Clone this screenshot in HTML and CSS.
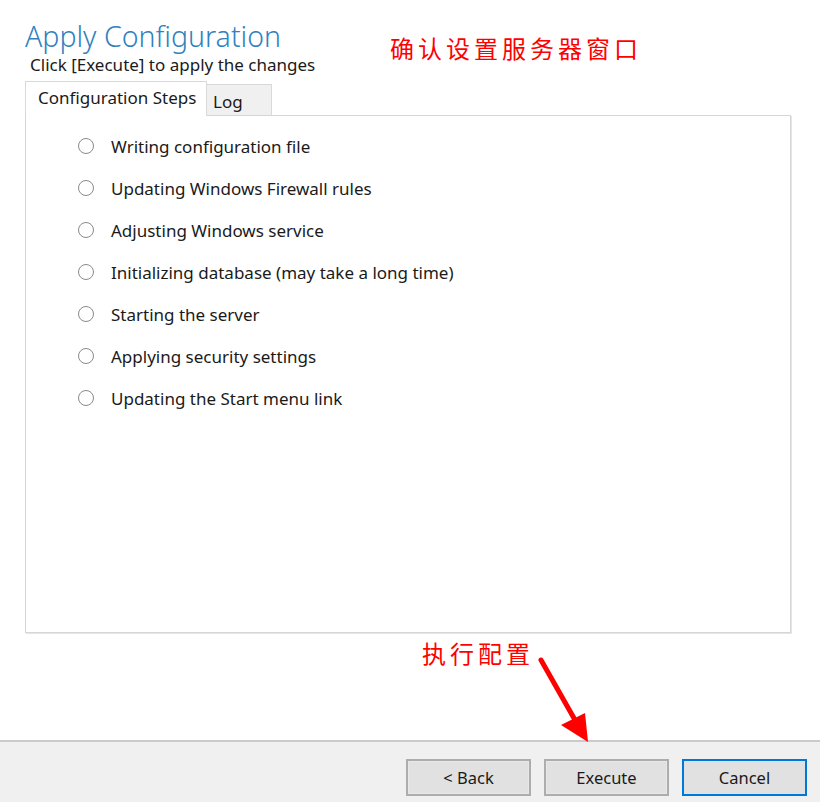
FILE: index.html
```html
<!DOCTYPE html>
<html lang="en">
  <head>
    <meta charset="UTF-8" />
    <title>Apply Configuration</title>
    <link rel="stylesheet" href="styles.css">
  </head>
  <body>
    <div class="wizard">
      <div class="wizard-body">
        <h1 class="title">Apply Configuration</h1>
        <p class="subtitle">Click [Execute] to apply the changes</p>

        <div class="tabs">
          <div class="tab active">Configuration Steps</div>
          <div class="tab">Log</div>
        </div>
        <div class="tab-panel">
          <ul class="steps">
            <li><span class="radio"></span>Writing configuration file</li>
            <li><span class="radio"></span>Updating Windows Firewall rules</li>
            <li><span class="radio"></span>Adjusting Windows service</li>
            <li><span class="radio"></span>Initializing database (may take a long time)</li>
            <li><span class="radio"></span>Starting the server</li>
            <li><span class="radio"></span>Applying security settings</li>
            <li><span class="radio"></span>Updating the Start menu link</li>
          </ul>
        </div>
      </div>

      <div class="wizard-footer">
        <button class="btn">&lt; Back</button>
        <button class="btn">Execute</button>
        <button class="btn btn-default">Cancel</button>
      </div>

      <!-- red annotations drawn over the screenshot -->
      <div class="note note-top">确认设置服务器窗口</div>
      <div class="note note-exec">执行配置</div>
      <svg class="arrow" width="80" height="100" viewBox="0 0 80 100">
        <line x1="10" y1="12" x2="44" y2="72" stroke="#ff0000" stroke-width="5" stroke-linecap="round" />
        <polygon points="30,77 54,65 57,94" fill="#ff0000" />
      </svg>
    </div>
  </body>
</html>
```

FILE: styles.css
```css
body {
  margin: 0;
  padding: 0;
  font-family: "Noto Sans", "Open Sans", sans-serif;
  color: #1a1a1a;
  background: white;
}

.wizard {
  position: relative;
  width: 820px;
  height: 802px;
  display: flex;
  flex-direction: column;
}

.wizard-body {
  flex: 1;
  padding: 19px 29px 0 25px;
}

.title {
  margin: 0;
  font-size: 28.5px;
  font-weight: 300;
  line-height: 34px;
  color: #2f82bf;
}

.subtitle {
  margin: 0 0 0 5px;
  font-size: 17px;
  line-height: 23px;
  color: #1a1a1a;
}

.tabs {
  display: flex;
  align-items: flex-end;
  margin-top: 5px;
  height: 34px;
}

.tab {
  font-size: 17px;
  border: 1px solid #d9d9d9;
  border-bottom: none;
}

.tab.active {
  width: 168px;
  height: 34px;
  line-height: 31px;
  padding: 0 0 0 12px;
  background: white;
  position: relative;
  z-index: 1;
  margin-bottom: -1px;
}

.tab + .tab {
  width: 58px;
  height: 30px;
  line-height: 34px;
  padding: 0 0 0 6px;
  background: #f0f0f0;
  border-left: none;
}

.tab-panel {
  height: 516px;
  border: 1px solid #d6d6d6;
  box-shadow: 1px 1px 0 #e6e6e6;
}

.steps {
  list-style: none;
  margin: 0;
  padding: 9px 0 0 52px;
}

.steps li {
  display: flex;
  align-items: center;
  height: 42px;
  font-size: 17px;
}

.radio {
  width: 14px;
  height: 14px;
  border: 1.5px solid #8a8a8a;
  border-radius: 50%;
  margin-right: 17px;
}

.wizard-footer {
  height: 62px;
  background: #f0f0f0;
  border-top: 2px solid #cbcbcb;
  display: flex;
  justify-content: flex-end;
  align-items: flex-start;
  gap: 13px;
  padding: 17px 13px 0 0;
  box-sizing: border-box;
}

.btn {
  width: 125px;
  height: 37px;
  font-family: "Noto Sans", "Open Sans", sans-serif;
  font-size: 16.5px;
  color: #1a1a1a;
  background: #e1e1e1;
  border: 2px solid #adadad;
  box-shadow: inset 0 0 0 1px #e8e8e8;
}

.btn-default {
  border-color: #0078d7;
  box-shadow: none;
}

/* Annotations */
.note {
  position: absolute;
  font-family: "Noto Sans CJK SC", sans-serif;
  font-size: 24px;
  letter-spacing: 4px;
  color: #ff0000;
  line-height: 30px;
}

.note-top {
  left: 390px;
  top: 33px;
}

.note-exec {
  left: 422px;
  top: 638px;
}

.arrow {
  position: absolute;
  left: 531px;
  top: 648px;
}
```
